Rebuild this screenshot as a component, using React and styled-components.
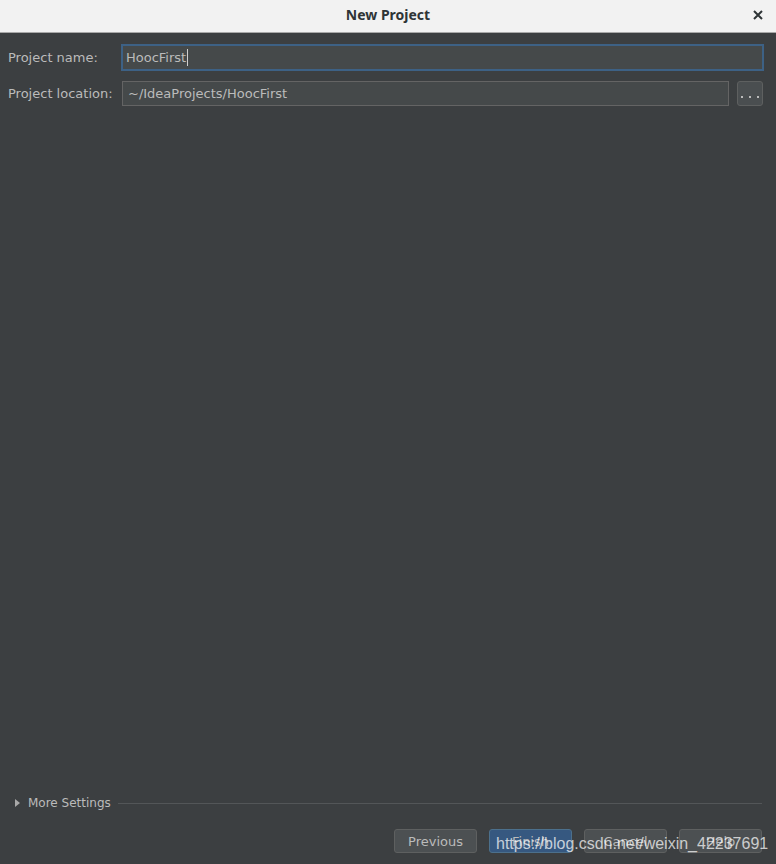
import React from "react";
import styled, { createGlobalStyle } from "styled-components";

const GlobalStyle = createGlobalStyle`
  html, body {
    margin: 0;
    padding: 0;
    background: #3c3f41;
  }
  * {
    box-sizing: border-box;
  }
`;

const Window = styled.div`
  position: relative;
  width: 776px;
  height: 864px;
  display: flex;
  flex-direction: column;
  background: #3c3f41;
  font-family: "DejaVu Sans", "Noto Sans", sans-serif;
  font-size: 13px;
  color: #bbbbbb;
  overflow: hidden;
`;

const TitleBar = styled.div`
  position: relative;
  height: 33px;
  flex: none;
  display: flex;
  align-items: center;
  justify-content: center;
  background: #f2f2f2;
  border-bottom: 1px solid #a9a9a9;
`;

const Title = styled.span`
  font-family: "Noto Sans", "DejaVu Sans", sans-serif;
  font-weight: 700;
  font-size: 14px;
  color: #2e3436;
  margin-top: -4px;
`;

const Close = styled.button`
  position: absolute;
  right: 10px;
  top: 7px;
  width: 16px;
  height: 16px;
  padding: 0;
  border: none;
  background: none;
  display: flex;
  align-items: center;
  justify-content: center;
`;

const Form = styled.div`
  display: flex;
  flex-direction: column;
  gap: 10px;
  padding: 11px 13px 0 8px;
`;

const Row = styled.div`
  display: flex;
  align-items: center;
  gap: 8px;
`;

const Label = styled.label`
  width: 106px;
  flex: none;
  white-space: nowrap;
`;

const Field = styled.div`
  flex: 1;
  height: ${(p) => (p.$focused ? "27px" : "25px")};
  display: flex;
  align-items: center;
  padding: 0 ${(p) => (p.$focused ? "3px" : "5px")};
  background: #45494a;
  border: ${(p) => (p.$focused ? "2px solid #3d6185" : "1px solid #646464")};
  color: #bbbbbb;
  margin-left: ${(p) => (p.$focused ? "-1px" : "0")};
  margin-right: ${(p) => (p.$focused ? "-1px" : "0")};
`;

const Caret = styled.span`
  display: inline-block;
  width: 1px;
  height: 17px;
  margin-left: 1px;
  background: #cfcfcf;
`;

const Browse = styled.button`
  width: 26px;
  height: 25px;
  flex: none;
  padding: 0 0 7px;
  display: flex;
  align-items: flex-end;
  justify-content: center;
  gap: 6px;
  background: #4a4e50;
  border: 1px solid #5e6060;
  border-radius: 3px;
`;

const Dot = styled.span`
  width: 2px;
  height: 2px;
  background: #bbbbbb;
`;

const Spacer = styled.div`
  flex: 1;
`;

const MoreSettings = styled.div`
  display: flex;
  align-items: center;
  padding: 0 14px 0 15px;
  height: 16px;
`;

const Arrow = styled.span`
  width: 0;
  height: 0;
  border-top: 4px solid transparent;
  border-bottom: 4px solid transparent;
  border-left: 5px solid #a9a9a9;
  margin-right: 8px;
`;

const MoreText = styled.span`
  white-space: nowrap;
  font-size: 12px;
  margin-right: 7px;
`;

const Line = styled.div`
  flex: 1;
  height: 1px;
  background: #535658;
`;

const Buttons = styled.div`
  display: flex;
  justify-content: flex-end;
  gap: 12px;
  padding: 18px 14px 11px 0;
`;

const Button = styled.button`
  width: 83px;
  height: 24px;
  padding: 0;
  font-family: "DejaVu Sans", "Noto Sans", sans-serif;
  font-size: 13px;
  color: #bbbbbb;
  background: ${(p) => (p.$primary ? "#365880" : "#4c5052")};
  border: 1px solid ${(p) => (p.$primary ? "#4c708c" : "#5e6060")};
  border-radius: 3px;
`;

const Watermark = styled.div`
  position: absolute;
  left: 496px;
  top: 835px;
  font-family: "Liberation Sans", Arial, sans-serif;
  font-size: 16px;
  color: rgba(255, 255, 255, 0.72);
  white-space: nowrap;
  pointer-events: none;
`;

export default function App() {
  return (
    <Window>
      <GlobalStyle />
      <TitleBar>
        <Title>New Project</Title>
        <Close aria-label="Close">
          <svg width="10" height="10" viewBox="0 0 10 10">
            <path d="M1 1 L9 9 M9 1 L1 9" stroke="#2e3436" strokeWidth="2" />
          </svg>
        </Close>
      </TitleBar>
      <Form>
        <Row>
          <Label>Project name:</Label>
          <Field $focused>
            HoocFirst
            <Caret />
          </Field>
        </Row>
        <Row>
          <Label>Project location:</Label>
          <Field>~/IdeaProjects/HoocFirst</Field>
          <Browse aria-label="Browse">
            <Dot />
            <Dot />
            <Dot />
          </Browse>
        </Row>
      </Form>
      <Spacer />
      <MoreSettings>
        <Arrow />
        <MoreText>More Settings</MoreText>
        <Line />
      </MoreSettings>
      <Buttons>
        <Button>Previous</Button>
        <Button $primary>Finish</Button>
        <Button>Cancel</Button>
        <Button>Help</Button>
      </Buttons>
      <Watermark>https://blog.csdn.net/weixin_42237691</Watermark>
    </Window>
  );
}
